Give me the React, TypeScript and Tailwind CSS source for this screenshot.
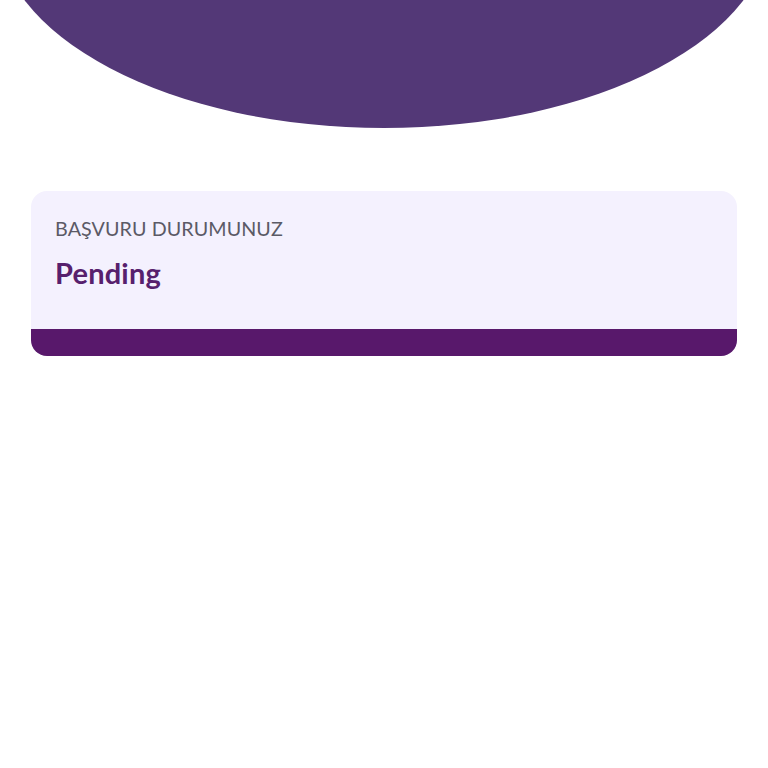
export default function App() {
  return (
    <div className="min-h-[768px] bg-white" style={{ fontFamily: 'Lato, "Noto Sans", sans-serif' }}>
      {/* decorative header shape */}
      <div className="h-[128px] overflow-hidden">
        <div className="-mt-[282px] -ml-[4px] w-[776px] h-[410px] rounded-[50%] bg-[#533877]"></div>
      </div>

      <div className="px-[31px] pt-[63px]">
        <div className="rounded-2xl overflow-hidden bg-[#f4f1fe]">
          <div className="px-6 pt-[26px] pb-[40px]">
            <p className="text-[19.7px] leading-6 text-[#5b5a66] tracking-[0.1px]">BAŞVURU DURUMUNUZ</p>
            <p className="mt-[16px] text-[29px] leading-8 font-bold text-[#57206d] tracking-[0.2px]">Pending</p>
          </div>
          <div className="h-[27px] bg-[#58186b]"></div>
        </div>
      </div>
    </div>
  )
}
